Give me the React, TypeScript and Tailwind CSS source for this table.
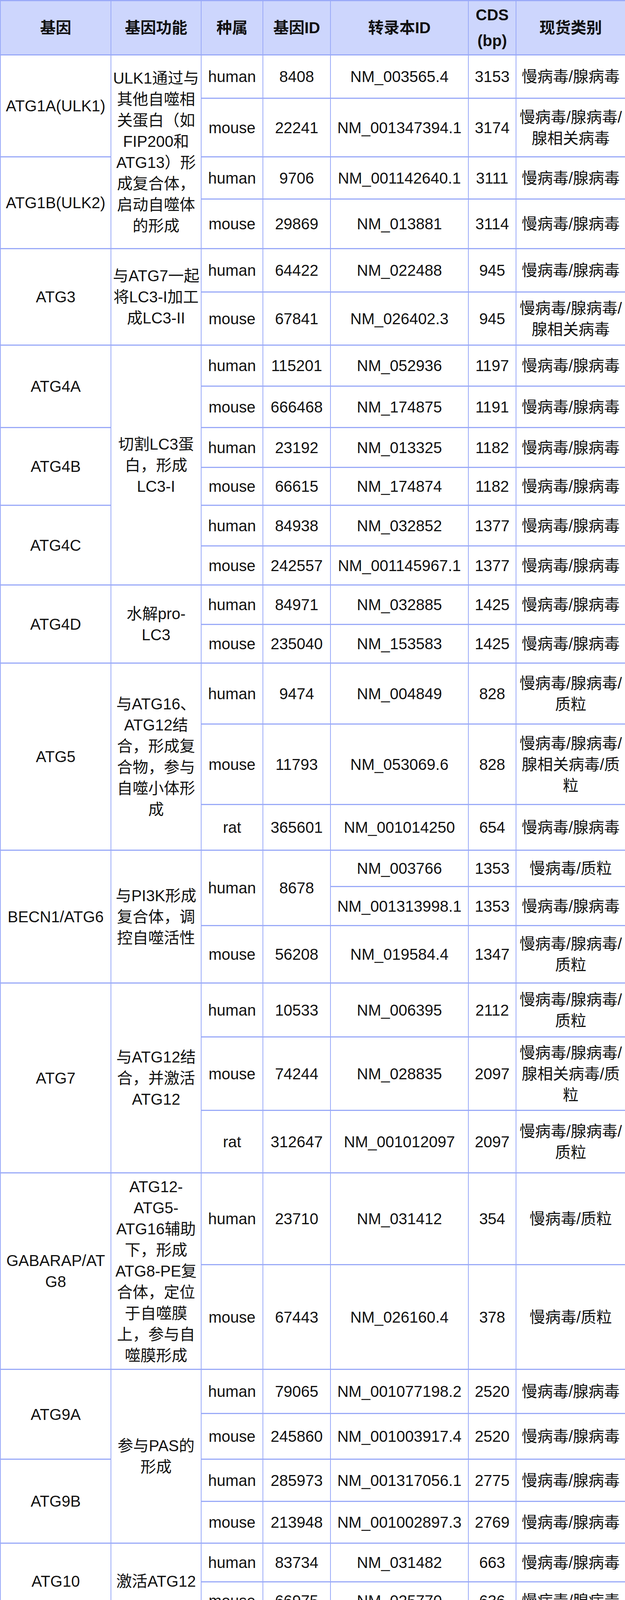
import React from "react";

type Cell = string | [string, number];
type Row = { h: string; c: Cell[] };

const V = "慢病毒/腺病毒";
const VA = "慢病毒/腺病毒/|腺相关病毒";
const VP = "慢病毒/腺病毒/|质粒";
const VAP = "慢病毒/腺病毒/|腺相关病毒/质|粒";

const headers = ["基因", "基因功能", "种属", "基因ID", "转录本ID", "CDS|(bp)", "现货类别"];

const colWidths = ["w-[283px]", "w-[231px]", "w-[158px]", "w-[173px]", "w-[353px]", "w-[122px]", "w-[280px]"];

const rows: Row[] = [
    { h: "h-[111px]", c: [["ATG1A(ULK1)", 2], ["ULK1通过与|其他自噬相|关蛋白（如|FIP200和|ATG13）形|成复合体，|启动自噬体|的形成", 4], "human", "8408", "NM_003565.4", "3153", V] },
    { h: "h-[150px]", c: ["mouse", "22241", "NM_001347394.1", "3174", VA] },
    { h: "h-[108px]", c: [["ATG1B(ULK2)", 2], "human", "9706", "NM_001142640.1", "3111", V] },
    { h: "h-[127px]", c: ["mouse", "29869", "NM_013881", "3114", V] },
    { h: "h-[111px]", c: [["ATG3", 2], ["与ATG7一起|将LC3-I加工|成LC3-II", 2], "human", "64422", "NM_022488", "945", V] },
    { h: "h-[136px]", c: ["mouse", "67841", "NM_026402.3", "945", VA] },
    { h: "h-[105px]", c: [["ATG4A", 2], ["切割LC3蛋|白，形成|LC3-I", 6], "human", "115201", "NM_052936", "1197", V] },
    { h: "h-[106px]", c: ["mouse", "666468", "NM_174875", "1191", V] },
    { h: "h-[102px]", c: [["ATG4B", 2], "human", "23192", "NM_013325", "1182", V] },
    { h: "h-[97px]", c: ["mouse", "66615", "NM_174874", "1182", V] },
    { h: "h-[104px]", c: [["ATG4C", 2], "human", "84938", "NM_032852", "1377", V] },
    { h: "h-[100px]", c: ["mouse", "242557", "NM_001145967.1", "1377", V] },
    { h: "h-[101px]", c: [["ATG4D", 2], ["水解pro-|LC3", 2], "human", "84971", "NM_032885", "1425", V] },
    { h: "h-[99px]", c: ["mouse", "235040", "NM_153583", "1425", V] },
    { h: "h-[156px]", c: [["ATG5", 3], ["与ATG16、|ATG12结|合，形成复|合物，参与|自噬小体形|成", 3], "human", "9474", "NM_004849", "828", VP] },
    { h: "h-[206px]", c: ["mouse", "11793", "NM_053069.6", "828", VAP] },
    { h: "h-[117px]", c: ["rat", "365601", "NM_001014250", "654", V] },
    { h: "h-[93px]", c: [["BECN1/ATG6", 3], ["与PI3K形成|复合体，调|控自噬活性", 3], ["human", 2], ["8678", 2], "NM_003766", "1353", "慢病毒/质粒"] },
    { h: "h-[100px]", c: ["NM_001313998.1", "1353", V] },
    { h: "h-[147px]", c: ["mouse", "56208", "NM_019584.4", "1347", VP] },
    { h: "h-[138px]", c: [["ATG7", 3], ["与ATG12结|合，并激活|ATG12", 3], "human", "10533", "NM_006395", "2112", VP] },
    { h: "h-[188px]", c: ["mouse", "74244", "NM_028835", "2097", VAP] },
    { h: "h-[160px]", c: ["rat", "312647", "NM_001012097", "2097", VP] },
    { h: "h-[235px]", c: [["GABARAP/AT|G8", 2], ["ATG12-|ATG5-|ATG16辅助|下，形成|ATG8-PE复|合体，定位|于自噬膜|上，参与自|噬膜形成", 2], "human", "23710", "NM_031412", "354", "慢病毒/质粒"] },
    { h: "h-[268px]", c: ["mouse", "67443", "NM_026160.4", "378", "慢病毒/质粒"] },
    { h: "h-[113px]", c: [["ATG9A", 2], ["参与PAS的|形成", 4], "human", "79065", "NM_001077198.2", "2520", V] },
    { h: "h-[117px]", c: ["mouse", "245860", "NM_001003917.4", "2520", V] },
    { h: "h-[108px]", c: [["ATG9B", 2], "human", "285973", "NM_001317056.1", "2775", V] },
    { h: "h-[107px]", c: ["mouse", "213948", "NM_001002897.3", "2769", V] },
    { h: "h-[99px]", c: [["ATG10", 2], ["激活ATG12", 2], "human", "83734", "NM_031482", "663", V] },
    { h: "h-[96px]", c: ["mouse", "66975", "NM_025770", "636", V] },
    { h: "h-[144px]", c: [["ATG12", 3], ["ATG12-|ATG5-|ATG16L1复|合物，参与|自噬小体形|成", 3], "human", "9140", "NM_004707", "423", VP] },
    { h: "h-[161px]", c: ["mouse", "67526", "NM_026217", "426", VA] },
    { h: "h-[97px]", c: ["dog", "474636", "XM_038681206.1", "423", "puc57"] },
    { h: "h-[138px]", c: [["ATG13", 2], ["形成ULK1复|合物，与|mTOR受体|互作", 2], "human", "9776", "NM_001205120", "1554", V] },
    { h: "h-[124px]", c: ["mouse", "51897", "NM_145528", "1440", V] },
    { h: "h-[113px]", c: [["ATG14", 2], ["atg14-|vps15-|vps34复合|物，参与膜|泡的形成", 2], "human", "22863", "NM_014924", "1479", V] },
    { h: "h-[215px]", c: ["mouse", "100504|663", "NM_172599", "1479", VAP] },
    { h: "h-[156px]", c: [["ATG16L1", 3], ["ATG12-|ATG5-|ATG16L1复|合物，参与|自噬小体的|形成", 3], "human", "55054", "NM_030803.7", "1824", VP] },
    { h: "h-[157px]", c: [["mouse", 2], ["77040", 2], "NM_029846.4", "1824", "慢病毒/腺相关|病毒"] },
    { h: "h-[116px]", c: ["NM_001205391", "1872", V] },
    { h: "h-[149px]", c: [["ATG16L2", 2], ["与ATG12、|ATG5形成复|合物，参与|自噬小体的|形成", 2], "human", "89849", "NM_001318766", "1542", V] },
    { h: "h-[141px]", c: ["mouse", "73683", "NM_001111111.1", "1872", V] },
    { h: "h-[128px]", c: [["ATG101", 2], ["与ATG13结|合，防止|ATG13降解", 2], "human", "60673", "NM_021934", "657", V] },
    { h: "h-[120px]", c: ["mouse", "68118", "NM_026566", "657", V] },
];

const Lines = ({ text }: { text: string }) => (
    <>
        {text.split("|").map((line, i) => (
            <React.Fragment key={i}>
                {i > 0 && <br />}
                {line}
            </React.Fragment>
        ))}
    </>
);

const cellClass =
    "border-x-2 border-y-[3px] border-[#9aaaf8] text-center align-middle px-1 py-0 whitespace-nowrap";

const App = () => {
    return (
        <div className="w-full bg-white text-[#111] font-['Liberation_Sans','Noto_Sans_CJK_SC',sans-serif]">
            <table className="w-full table-fixed border-collapse text-[40px] leading-[54px]">
                <colgroup>
                    {colWidths.map((w, i) => (
                        <col key={i} className={w} />
                    ))}
                </colgroup>
                <thead>
                    <tr className="h-[139px] bg-[#cdd6fd]">
                        {headers.map((t, i) => (
                            <th key={i} className={`${cellClass} font-bold leading-[66px]`}>
                                <Lines text={t} />
                            </th>
                        ))}
                    </tr>
                </thead>
                <tbody>
                    {rows.map((row, ri) => (
                        <tr key={ri} className={row.h}>
                            {row.c.map((cell, ci) => {
                                const [text, span] = typeof cell === "string" ? [cell, 1] : cell;
                                return (
                                    <td key={ci} rowSpan={span} className={cellClass}>
                                        <Lines text={text} />
                                    </td>
                                );
                            })}
                        </tr>
                    ))}
                </tbody>
            </table>
        </div>
    );
};

export default App;
